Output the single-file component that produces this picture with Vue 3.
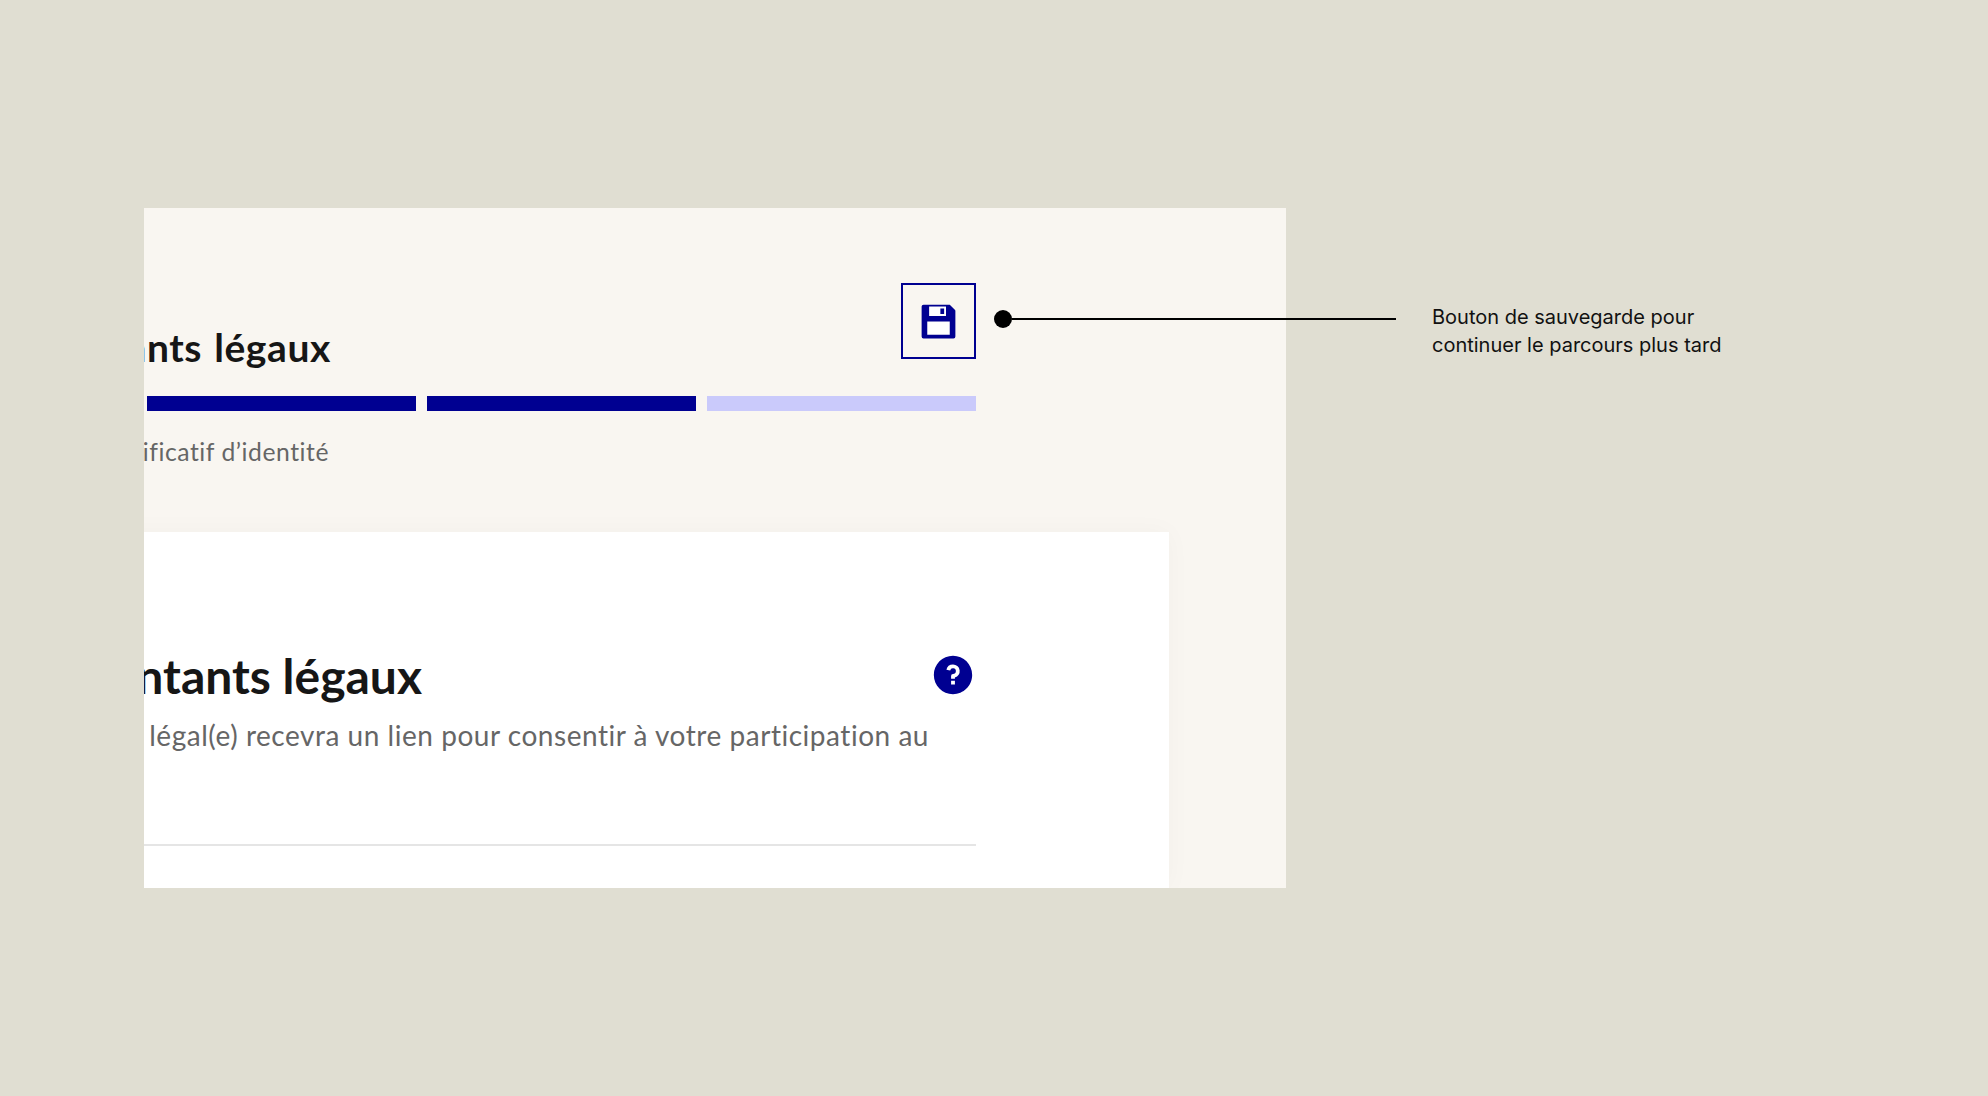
<script setup>
const steps = [
  { id: 1, done: true },
  { id: 2, done: true },
  { id: 3, done: true },
  { id: 4, done: false },
]
</script>

<template>
  <div class="page">
    <section class="frame">
      <div class="step">
        <div class="step-head">
          <h2 class="step-title">Représentants légaux</h2>
          <button class="save" type="button" aria-label="Sauvegarder">
            <svg viewBox="0 0 24 24" width="45" height="45" aria-hidden="true">
              <path fill="#fff" d="M7 4h9v5H7zM6 12h12v7H6z" />
              <path fill="#000091" d="M4 3h14l2.707 2.707a1 1 0 0 1 .293.707V20a1 1 0 0 1-1 1H4a1 1 0 0 1-1-1V4a1 1 0 0 1 1-1zm3 1v5h9V4H7zm-1 8v7h12v-7H6zm7-7h2v3h-2V5z" />
            </svg>
          </button>
        </div>
        <div class="bars">
          <span v-for="s in steps" :key="s.id" class="bar" :class="{ done: s.done }"></span>
        </div>
        <p class="next">Étape suivante : Justificatif d’identité</p>
      </div>
      <div class="card">
        <div class="card-head">
          <h1 class="card-title">Vos représentants légaux</h1>
          <svg class="help" viewBox="0 0 24 24" width="46" height="46" aria-hidden="true">
            <path fill="#000091" d="M12 22C6.477 22 2 17.523 2 12S6.477 2 12 2s10 4.477 10 10-4.477 10-10 10zm-1-7v2h2v-2h-2zm2-1.645A3.502 3.502 0 0 0 12 6.5a3.501 3.501 0 0 0-3.433 2.813l1.962.393A1.5 1.5 0 1 1 12 11.5a1 1 0 0 0-1 1V14h2v-.645z" />
          </svg>
        </div>
        <p class="lead">Votre représentant(e) légal(e) recevra un lien pour consentir à votre participation au</p>
        <hr class="rule" />
      </div>
    </section>

    <aside class="callout">
      <span class="dot"></span>
      <span class="wire"></span>
      <p class="note">Bouton de sauvegarde pour<br />continuer le parcours plus tard</p>
    </aside>
  </div>
</template>

<style scoped>
.page {
  position: relative;
  box-sizing: border-box;
  width: 1988px;
  height: 1096px;
  padding: 208px 0 0 144px;
  background: #e0ded2;
  overflow: hidden;
}
.frame {
  display: flex;
  flex-direction: column;
  width: 1142px;
  height: 680px;
  background: #f9f6f1;
  overflow: hidden;
  font-family: Lato, "Open Sans", sans-serif;
  font-variant-ligatures: none;
}
.step {
  box-sizing: border-box;
  flex: none;
  width: 1109px;
  height: 324px;
  margin-left: -277px;
  padding-top: 75px;
}
.step-head {
  display: flex;
  height: 90px;
}
.step-title {
  flex: 1;
  align-self: flex-end;
  min-width: 0;
  margin: 0 0 2px;
  padding-right: 570px;
  color: #161616;
  font-size: 39px;
  font-weight: 700;
  line-height: 48px;
  letter-spacing: 0.6px;
  word-spacing: 2px;
  text-align: right;
  white-space: nowrap;
}
.save {
  display: flex;
  flex: none;
  align-items: center;
  justify-content: center;
  box-sizing: border-box;
  width: 75px;
  height: 76px;
  padding: 0;
  border: 2px solid #000091;
  background: transparent;
}
.bars {
  display: flex;
  gap: 11px;
  margin-top: 23px;
}
.bar {
  flex: 1;
  height: 15px;
  background: #cacafb;
}
.bar.done {
  background: #000091;
}
.next {
  margin: 25px 0 0;
  padding-right: 647px;
  color: #666;
  font-size: 24.7px;
  line-height: 32px;
  letter-spacing: 0.55px;
  text-align: right;
  white-space: nowrap;
}
.card {
  display: flex;
  flex: 1;
  flex-direction: column;
  box-sizing: border-box;
  width: 1425px;
  margin-left: -400px;
  padding: 116px 193px 0 0;
  background: #fff;
  box-shadow: 0 0 24px rgba(0, 0, 0, 0.03);
}
.card-head {
  display: flex;
  align-items: center;
  height: 56px;
}
.card-title {
  flex: 1;
  min-width: 0;
  margin: 0;
  padding-right: 508px;
  color: #161616;
  font-size: 48px;
  font-weight: 700;
  line-height: 56px;
  text-align: right;
  white-space: nowrap;
}
.help {
  flex: none;
  margin-top: -2px;
}
.lead {
  margin: 13px 0 0;
  padding-right: 47px;
  color: #666;
  font-size: 28px;
  line-height: 36px;
  letter-spacing: 0.53px;
  text-align: right;
  white-space: nowrap;
}
.rule {
  flex: none;
  height: 2px;
  margin: 91px 0 0;
  border: 0;
  background: #e5e5e5;
}
.callout {
  position: absolute;
  top: 310px;
  left: 994px;
  display: flex;
  align-items: flex-start;
}
.dot {
  flex: none;
  width: 18px;
  height: 18px;
  border-radius: 50%;
  background: #000;
}
.wire {
  flex: none;
  width: 384px;
  height: 2px;
  margin: 8px 36px 0 0;
  background: #000;
}
.note {
  margin: -7px 0 0;
  color: #111;
  font-family: Inter, sans-serif;
  font-size: 20px;
  line-height: 28px;
  white-space: nowrap;
}
</style>
